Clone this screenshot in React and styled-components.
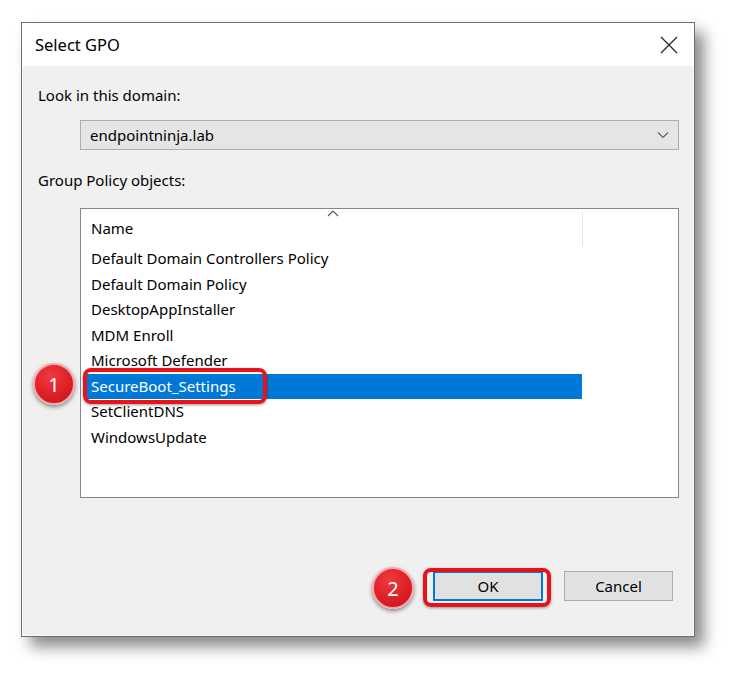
import styled, { createGlobalStyle } from "styled-components";

const Global = createGlobalStyle`
  body {
    margin: 0;
    background: #fff;
    font-family: "Noto Sans", "Liberation Sans", Arial, sans-serif;
  }
`;

const policies = [
  "Default Domain Controllers Policy",
  "Default Domain Policy",
  "DesktopAppInstaller",
  "MDM Enroll",
  "Microsoft Defender",
  "SecureBoot_Settings",
  "SetClientDNS",
  "WindowsUpdate",
];

const App = () => {
  return (
    <>
      <Global />
      <Page>
        <Dialog>
          <TitleBar>
            <span>Select GPO</span>
            <CloseBtn>
              <svg width="18" height="18" viewBox="0 0 18 18">
                <path d="M1 1 L17 17 M17 1 L1 17" stroke="#222" strokeWidth="1.2" fill="none" />
              </svg>
            </CloseBtn>
          </TitleBar>

          <Body>
            <Label>Look in this domain:</Label>
            <Combo>
              <span>endpointninja.lab</span>
              <svg width="12" height="8" viewBox="0 0 12 8">
                <path d="M1 1.5 L6 6.5 L11 1.5" stroke="#606060" strokeWidth="1.1" fill="none" />
              </svg>
            </Combo>

            <Label className="second">Group Policy objects:</Label>
            <ListBox>
              <Header>
                <span>Name</span>
                <SortCaret>
                  <svg width="12" height="7" viewBox="0 0 12 7">
                    <path d="M1 6 L6 1 L11 6" stroke="#555" strokeWidth="1.1" fill="none" />
                  </svg>
                </SortCaret>
                <ColSep />
              </Header>
              {policies.map((p) => (
                <Row key={p} $selected={p === "SecureBoot_Settings"}>
                  {p}
                </Row>
              ))}
            </ListBox>

            <Buttons>
              <Button $default>OK</Button>
              <Button>Cancel</Button>
            </Buttons>
          </Body>

          <Highlight $left={61} $top={345} $w={184} $h={36} />
          <Highlight $left={401} $top={545} $w={128} $h={39} />
          <Badge $left={11} $top={340}>1</Badge>
          <Badge $left={350} $top={544}>2</Badge>
        </Dialog>
      </Page>
    </>
  );
};

const Page = styled.div`
  padding: 22px 0 0 21px;
  height: 658px;
`;

const Dialog = styled.div`
  position: relative;
  width: 672px;
  height: 613px;
  border: 1px solid #6e6e6e;
  background: #f0f0f0;
  box-shadow: inset 0 0 0 1px #fafafa, 9px 10px 14px rgba(0, 0, 0, 0.45);
  display: flex;
  flex-direction: column;
`;

const TitleBar = styled.div`
  height: 43px;
  background: #fff;
  display: flex;
  align-items: center;
  justify-content: space-between;
  padding: 0 14px 0 13px;
  font-size: 16.5px;
  color: #000;
`;

const CloseBtn = styled.div`
  display: flex;
  align-items: center;
  padding-right: 2px;
`;

const Body = styled.div`
  flex: 1;
  display: flex;
  flex-direction: column;
  padding: 0 15px 0 16px;
  font-size: 15px;
  color: #000;
`;

const Label = styled.div`
  margin-top: 19px;
  line-height: 20px;

  &.second {
    margin-top: 20px;
  }
`;

const Combo = styled.div`
  margin: 15px 0 0 42px;
  height: 28px;
  border: 1px solid #adadad;
  background: #e5e5e5;
  display: flex;
  align-items: center;
  justify-content: space-between;
  padding: 0 9px 0 9px;
`;

const ListBox = styled.div`
  margin: 18px 0 0 42px;
  height: 288px;
  border: 1px solid #828790;
  background: #fff;
`;

const Header = styled.div`
  position: relative;
  height: 37px;
  display: flex;
  align-items: center;
  padding-left: 10px;
  padding-top: 1px;
  box-sizing: border-box;
`;

const SortCaret = styled.div`
  position: absolute;
  left: 246px;
  top: 1px;
  display: flex;
`;

const ColSep = styled.div`
  position: absolute;
  left: 501px;
  top: 3px;
  width: 1px;
  height: 34px;
  background: #e5e5e5;
`;

const Row = styled.div`
  width: 491px;
  height: 25.5px;
  line-height: 25px;
  margin-left: 3px;
  padding-left: 7px;
  background: ${(p) => (p.$selected ? "#0078d7" : "transparent")};
  color: ${(p) => (p.$selected ? "#fff" : "#000")};
  white-space: nowrap;
`;

const Buttons = styled.div`
  display: flex;
  justify-content: flex-end;
  gap: 21px;
  margin-top: 73px;
  padding-right: 6px;
`;

const Button = styled.div`
  width: ${(p) => (p.$default ? "106px" : "107px")};
  height: ${(p) => (p.$default ? "26px" : "28px")};
  border: ${(p) => (p.$default ? "2px solid #0078d7" : "1px solid #adadad")};
  background: #e1e1e1;
  display: flex;
  align-items: center;
  justify-content: center;
  font-size: 15px;
`;

const Highlight = styled.div`
  position: absolute;
  left: ${(p) => p.$left}px;
  top: ${(p) => p.$top}px;
  width: ${(p) => p.$w}px;
  height: ${(p) => p.$h}px;
  box-sizing: border-box;
  border: 4px solid #e8121a;
  border-radius: 8px;
  box-shadow: 0 1px 3px rgba(0, 0, 0, 0.4);
`;

const Badge = styled.div`
  position: absolute;
  left: ${(p) => p.$left}px;
  top: ${(p) => p.$top}px;
  width: 42px;
  height: 42px;
  border-radius: 50%;
  box-sizing: border-box;
  border: 2px solid #f5a5a8;
  background: radial-gradient(circle at 40% 30%, #ee3a40 0%, #dc2026 55%, #bf161c 100%);
  box-shadow: 0 2px 4px rgba(0, 0, 0, 0.45);
  color: #fff;
  font-family: "Noto Sans", "Liberation Sans", sans-serif;
  font-size: 20px;
  display: flex;
  align-items: center;
  justify-content: center;
`;

export default App;
